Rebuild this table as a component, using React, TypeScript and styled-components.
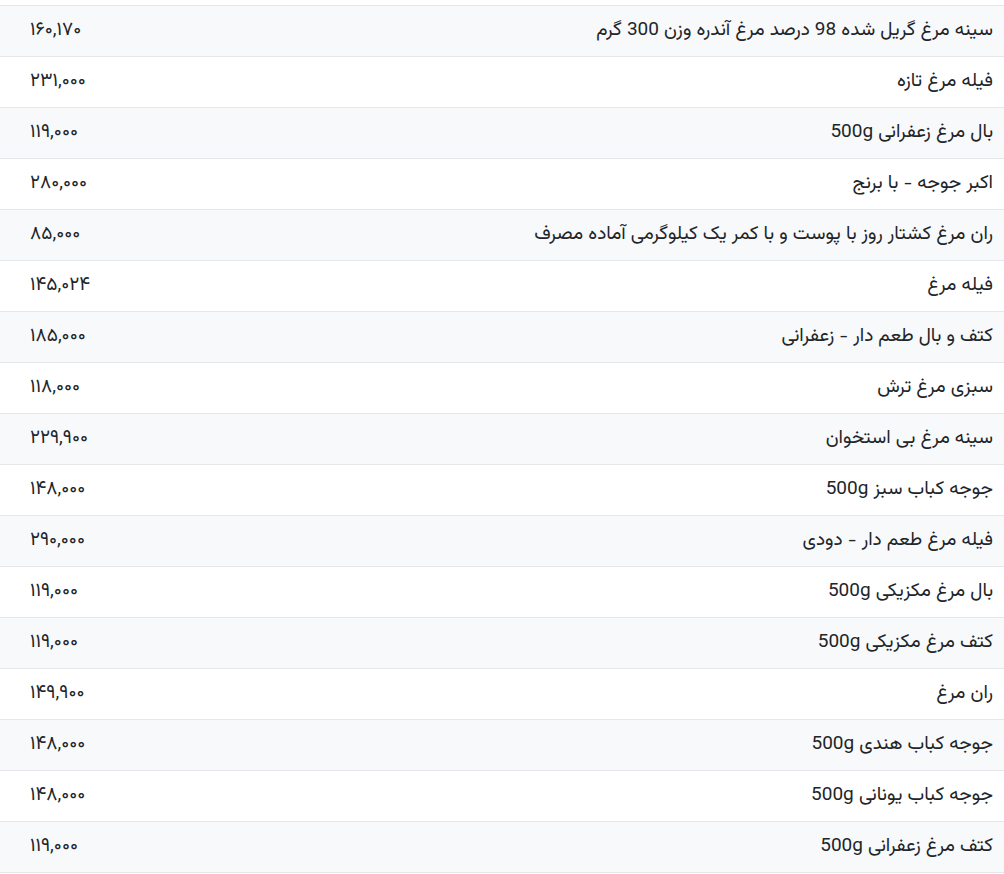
import styled, { createGlobalStyle } from 'styled-components';

const GlobalStyle = createGlobalStyle`
  html, body {
    margin: 0;
    padding: 0;
    background: #fff;
  }
  body {
    font-family: Vazirmatn, Roboto, "Noto Sans", sans-serif;
    font-size: 19px;
    color: #212529;
  }
`;

const Wrap = styled.div`
  width: 1004px;
  overflow: hidden;
  direction: rtl;
  padding-top: 5px;
`;

const Table = styled.table`
  width: 1044px;
  border-collapse: collapse;
  direction: rtl;
  table-layout: fixed;
`;

const Row = styled.tr<{ $striped: boolean }>`
  background: ${({ $striped }) => ($striped ? '#f8f9fa' : '#fff')};
  border-top: 1px solid #e5e7eb;
  border-bottom: 1px solid #e5e7eb;
`;

const NameCell = styled.td`
  height: 50px;
  padding: 0 11px 0 12px;
  text-align: right;
  vertical-align: middle;
  line-height: 24px;
`;

const PriceCell = styled.td`
  width: 200px;
  padding: 0 0 0 28px;
  text-align: left;
  vertical-align: middle;
  line-height: 24px;
`;

const ActionCell = styled.td`
  width: 40px;
  padding: 0 2px 0 0;
  vertical-align: middle;
`;

const Mark = styled.span`
  display: block;
  width: 8px;
  height: 1px;
  background: #c4c8cc;
`;

const items: [string, string][] = [
  ['سینه مرغ گریل شده 98 درصد مرغ آندره وزن 300 گرم', '۱۶۰,۱۷۰'],
  ['فیله مرغ تازه', '۲۳۱,۰۰۰'],
  ['بال مرغ زعفرانی 500g', '۱۱۹,۰۰۰'],
  ['اکبر جوجه - با برنج', '۲۸۰,۰۰۰'],
  ['ران مرغ کشتار روز با پوست و با کمر یک کیلوگرمی آماده مصرف', '۸۵,۰۰۰'],
  ['فیله مرغ', '۱۴۵,۰۲۴'],
  ['کتف و بال طعم دار - زعفرانی', '۱۸۵,۰۰۰'],
  ['سبزی مرغ ترش', '۱۱۸,۰۰۰'],
  ['سینه مرغ بی استخوان', '۲۲۹,۹۰۰'],
  ['جوجه کباب سبز 500g', '۱۴۸,۰۰۰'],
  ['فیله مرغ طعم دار - دودی', '۲۹۰,۰۰۰'],
  ['بال مرغ مکزیکی 500g', '۱۱۹,۰۰۰'],
  ['کتف مرغ مکزیکی 500g', '۱۱۹,۰۰۰'],
  ['ران مرغ', '۱۴۹,۹۰۰'],
  ['جوجه کباب هندی 500g', '۱۴۸,۰۰۰'],
  ['جوجه کباب یونانی 500g', '۱۴۸,۰۰۰'],
  ['کتف مرغ زعفرانی 500g', '۱۱۹,۰۰۰'],
];

const App = () => {
  return (
    <>
      <GlobalStyle />
      <Wrap>
        <Table>
          <tbody>
            {items.map(([name, price], i) => (
              <Row key={i} $striped={i % 2 === 0}>
                <NameCell>{name}</NameCell>
                <PriceCell>{price}</PriceCell>
                <ActionCell>
                  <Mark />
                </ActionCell>
              </Row>
            ))}
          </tbody>
        </Table>
      </Wrap>
    </>
  );
};

export default App;
